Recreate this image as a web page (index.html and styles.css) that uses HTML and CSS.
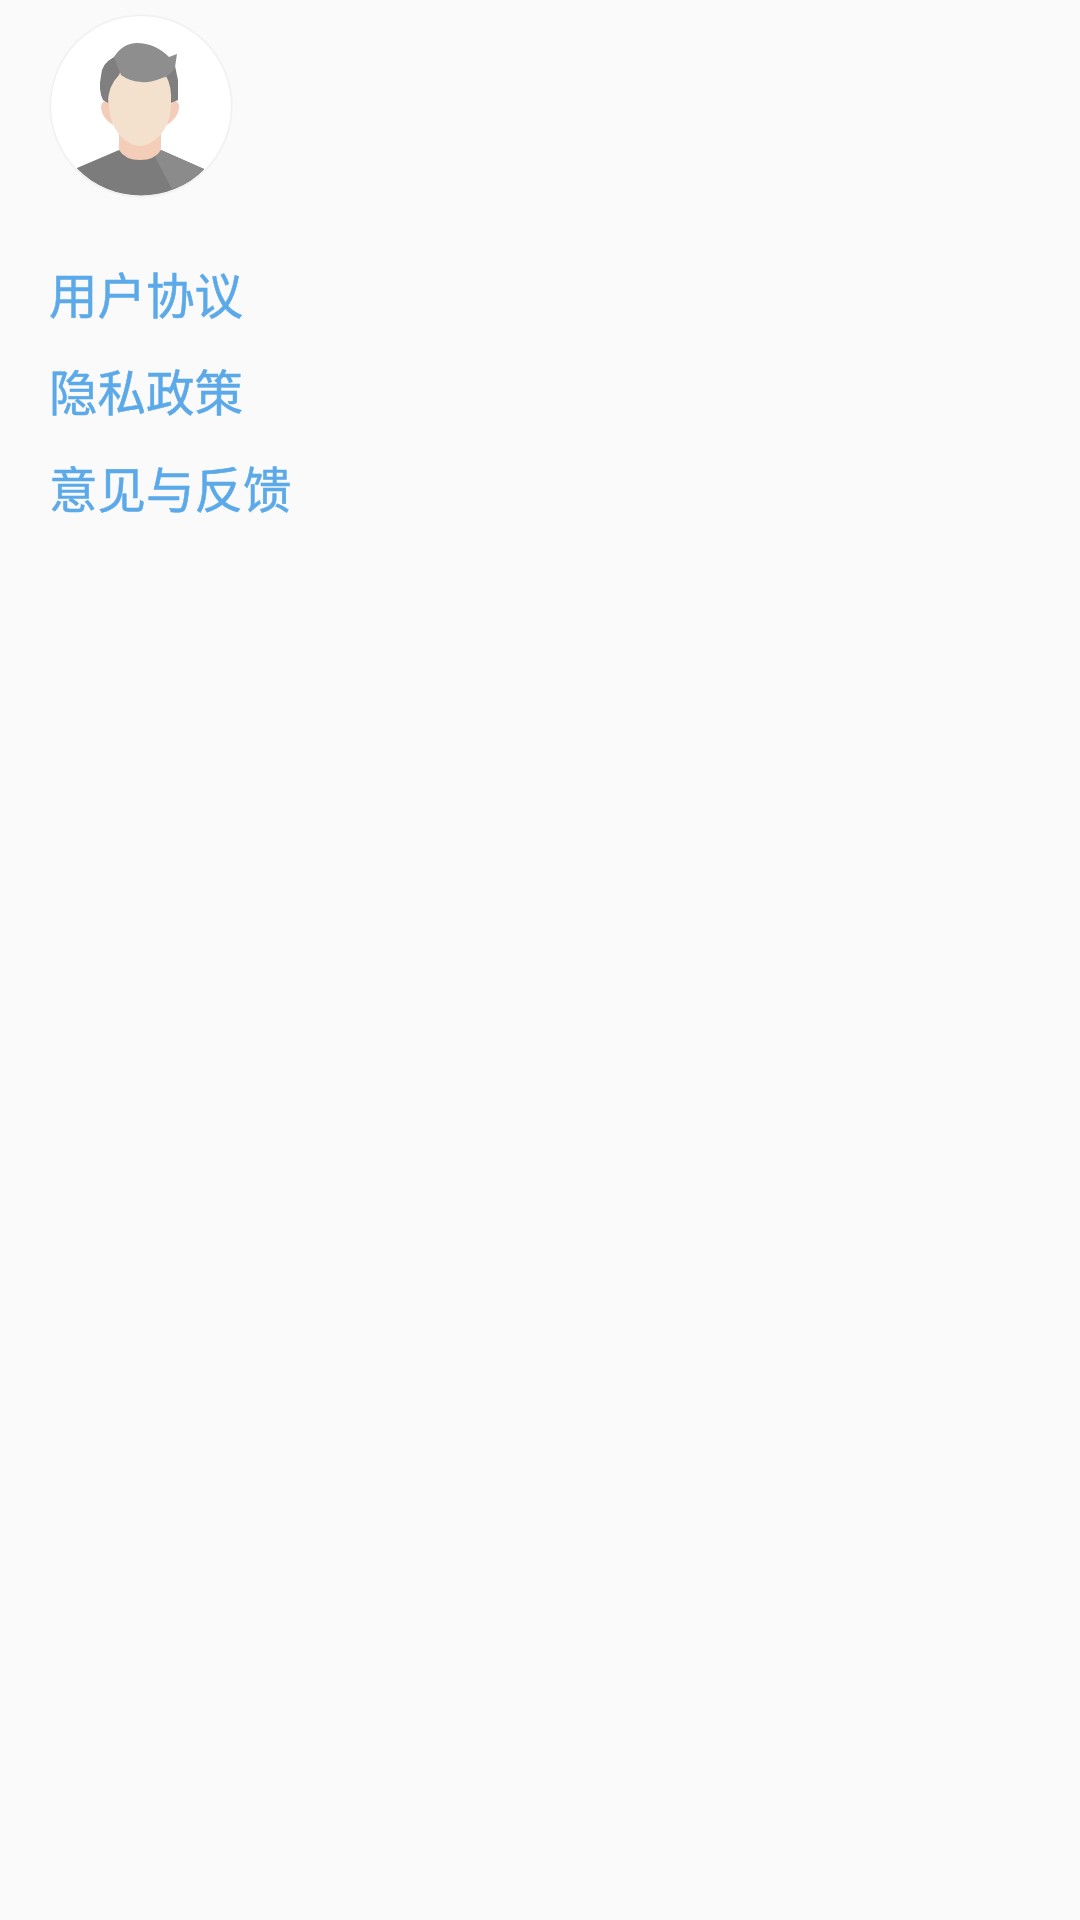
FILE: index.html
```html
<!DOCTYPE html>
<html lang="zh-CN">
<head>
    <meta charset="UTF-8">
    <title>我的</title>
    <link rel="stylesheet" href="styles.css">
</head>
<body>
    <div class="avatar">
        <svg viewBox="0 0 180 180" width="180" height="180">
            <defs>
                <clipPath id="avatar-clip"><circle cx="90" cy="90" r="89.5"/></clipPath>
            </defs>
            <g clip-path="url(#avatar-clip)">
                <!-- shoulders -->
                <path d="M26 152 L68 134 L110 134 L153 153 L153 190 L26 190 Z" fill="#7c7c7c"/>
                <path d="M103 139 L110 134 L153 153 L141 166 L121 173 Z" fill="#8b8b8b"/>
                <!-- neck -->
                <path d="M68 108 L110 108 L110 134 Q104 144 89 144 Q74 144 68 134 Z" fill="#f4cdb9"/>
                <!-- ears -->
                <path d="M60 84 Q50 83 50 92 Q51 102 62 109 Z" fill="#f4cdb9"/>
                <path d="M118 84 Q129 83 128 92 Q127 102 116 109 Z" fill="#f4cdb9"/>
                <!-- face -->
                <path d="M58 88 C57 72 60 64 68 58 L122 58 L122 88 L120 88 C120 104 113 117 105 123 Q97 130 89 130 Q81 130 73 123 C65 117 58 104 58 88 Z" fill="#f3e1cd"/>
                <!-- hair, sides -->
                <path d="M63 41 Q50 48 50 60 Q47 74 52 84 L57 87 Q57 70 68 59 L72 50 Z" fill="#7f7f7f"/>
                <path d="M108 50 L124 50 L127 64 L127 84 L120 87 Q121 70 115 60 Z" fill="#7f7f7f"/>
                <!-- hair, top -->
                <path d="M63 41 Q72 27 86 27 Q104 27 118 41 L126 38 L124 51 Q120 60 111 62 Q100 67 90 66 Q78 65 70 59 Z" fill="#8e8e8e"/>
            </g>
        </svg>
    </div>
    <ul class="links">
        <li><a href="#">用户协议</a></li>
        <li><a href="#">隐私政策</a></li>
        <li><a href="#">意见与反馈</a></li>
    </ul>
</body>
</html>
```
FILE: styles.css
```css
body {
    margin: 0;
    min-height: 1920px;
    padding: 16px 50px 0;
    box-sizing: border-box;
    background: #fafafb;
    font-family: "Noto Sans CJK SC", "Noto Sans", sans-serif;
}

.avatar {
    width: 180px;
    height: 180px;
    border-radius: 50%;
    background: #fff;
    box-shadow: 0 0 3px #dcdcdc;
    margin-left: 1px;
    overflow: hidden;
}

.avatar svg {
    display: block;
}

.links {
    list-style-type: none;
    margin: 49px 0 0 -1px;
    padding: 0;
}

.links li {
    height: 97px;
    line-height: 97px;
    font-size: 48.5px;
    -webkit-text-stroke: 0.5px #5ba9e8;
}

.links a {
    color: #5ba9e8;
    text-decoration: none;
}
```
